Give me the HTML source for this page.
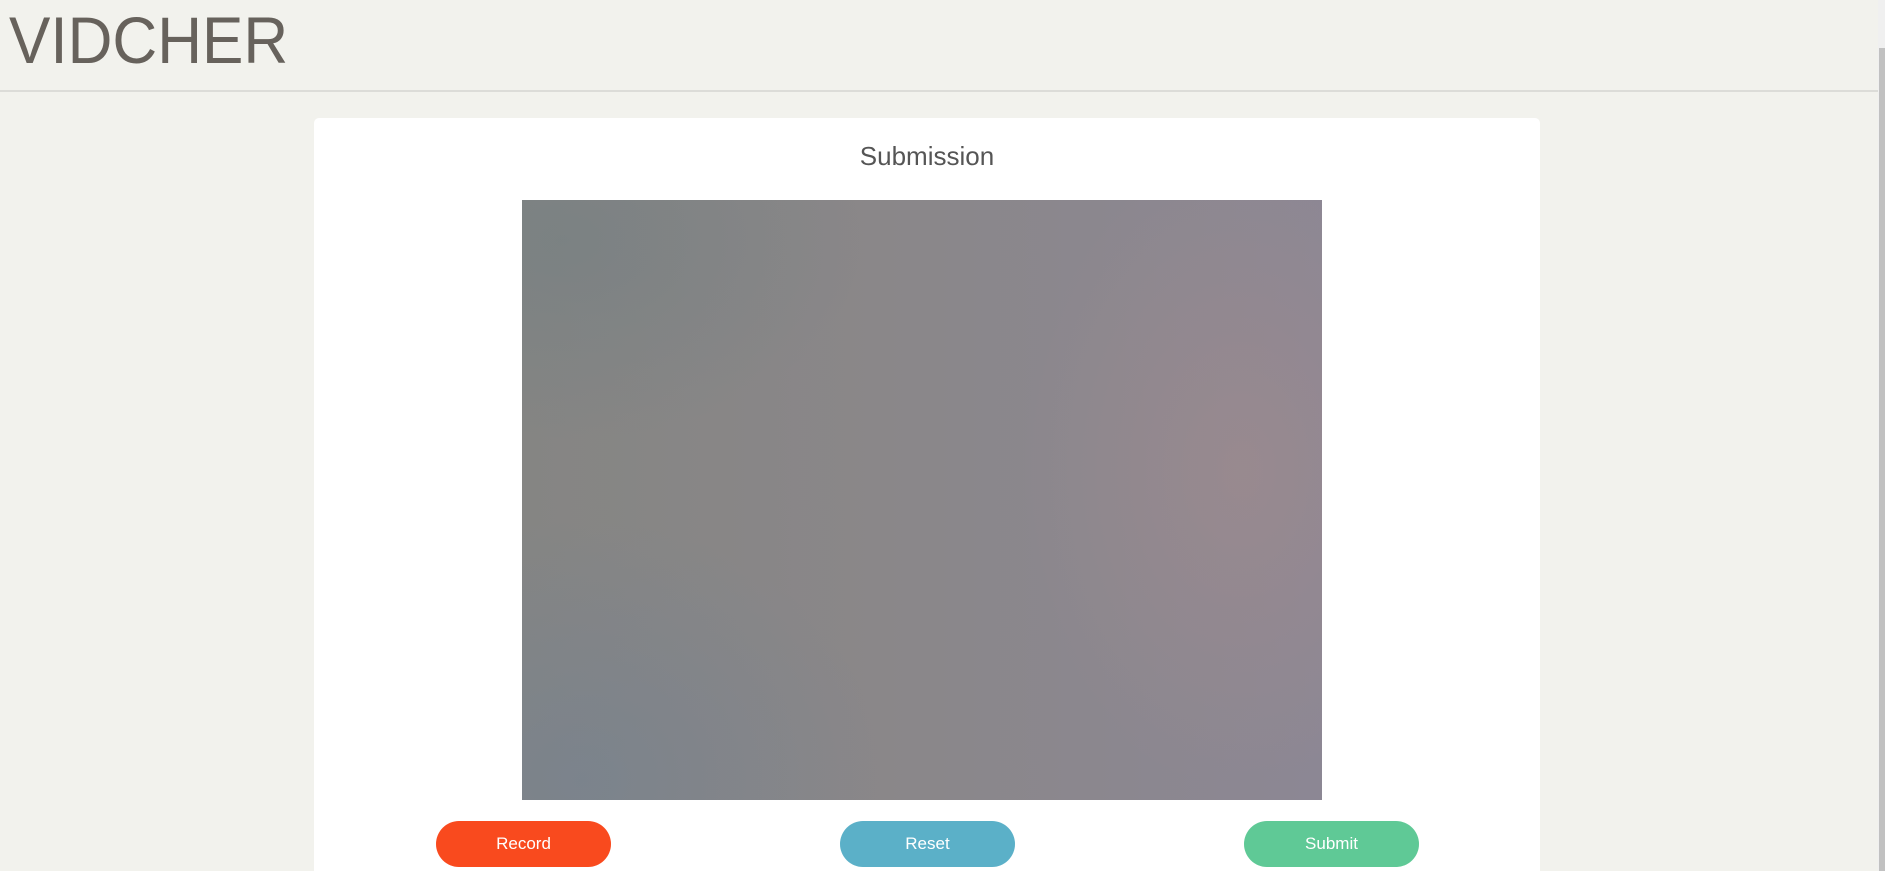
<!DOCTYPE html>
<html><head><meta charset="utf-8">
<style>
html,body{margin:0;padding:0;overflow:hidden;width:1885px;height:871px;}
body{background:#f2f2ed;font-family:"Liberation Sans",sans-serif;position:relative;}
.hdr{position:absolute;left:0;top:0;width:1878px;height:90px;border-bottom:2px solid #dcdcd8;}
.logo{position:absolute;left:9px;top:2px;font-size:66px;line-height:76px;color:#67625c;transform:scaleX(0.94);transform-origin:0 0;}
.card{position:absolute;left:314px;top:118px;width:1226px;height:753px;background:#fff;border-radius:5px 5px 0 0;overflow:hidden;}
.title{position:absolute;left:0;width:100%;top:23px;text-align:center;font-size:26px;color:#555;}
.video{position:absolute;left:522px;top:200px;width:800px;height:600px;
background:radial-gradient(ellipse 220px 320px at 720px 270px,rgba(165,140,140,0.5),transparent),
radial-gradient(ellipse 300px 260px at 60px 580px,rgba(110,128,150,0.45),transparent),
radial-gradient(ellipse 300px 200px at 40px 40px,rgba(110,125,130,0.45),transparent),
linear-gradient(90deg,#858583 0%,#8a8789 45%,#8c8794 100%);}
.btn{position:absolute;top:821px;width:175px;height:46px;border-radius:23px;color:#fff;font-size:17px;text-align:center;line-height:46px;}
.sb{position:absolute;left:1878px;top:0;width:7px;height:871px;background:#f0f0f0;}
.thumb{position:absolute;left:1879px;top:48px;width:6px;height:823px;background:#c1c1c1;}
</style></head><body>
<div class="hdr"><div class="logo">VIDCHER</div></div>
<div class="card"><div class="title">Submission</div></div>
<div class="video"></div>
<div class="btn" style="left:436px;background:#f94a1e">Record</div>
<div class="btn" style="left:840px;background:#5bb0c8">Reset</div>
<div class="btn" style="left:1244px;background:#5fc996">Submit</div>
<div class="sb"></div><div class="thumb"></div>
</body></html>
